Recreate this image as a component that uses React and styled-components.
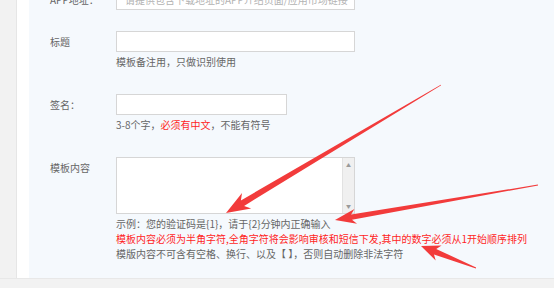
import React from "react";
import styled, { createGlobalStyle } from "styled-components";

const Global = createGlobalStyle`
  html, body { margin: 0; padding: 0; }
  body {
    width: 554px; height: 288px; overflow: hidden;
    font-family: "Noto Sans CJK SC", "Noto Sans", sans-serif;
    font-size: 10px; color: #666;
    background: #f2f2f2;
  }
`;

const Page = styled.div`
  position: relative;
  width: 554px;
  height: 288px;
  display: flex;
  flex-direction: column;
  overflow: hidden;
`;

const Body = styled.div`
  display: flex;
  height: 278px;
`;

const SideStrip = styled.div`
  width: 16px;
  background: #f2f2f2;
  border-right: 1px solid #e6e6e6;
`;

const Gutter = styled.div`
  width: 12px;
  background: #ffffff;
`;

const Panel = styled.div`
  flex: 1;
  background: #f5f9fd;
  padding-left: 21px;
  overflow: hidden;
`;

const Footer = styled.div`
  flex: 1;
  background: #f2f2f2;
  border-top: 1px solid #e8e8e8;
`;

const Row = styled.div`
  display: grid;
  grid-template-columns: 66px auto;
  align-items: start;
  margin-top: ${(p) => p.$top || 0}px;
  margin-bottom: ${(p) => p.$gap || 0}px;
`;

const Label = styled.div`
  line-height: 21px;
  font-size: 10px;
  color: #666;
  white-space: nowrap;
`;

const Field = styled.div`
  display: flex;
  flex-direction: column;
`;

const Input = styled.div`
  box-sizing: border-box;
  width: ${(p) => p.$w}px;
  height: 21px;
  background: #fff;
  border: 1px solid #d6d6d6;
  padding-left: 8px;
  line-height: 19px;
  color: #b3b3b3;
  font-size: 10px;
  white-space: nowrap;
  overflow: hidden;
`;

const TextArea = styled.div`
  box-sizing: border-box;
  width: 239px;
  height: 57px;
  background: #fff;
  border: 1px solid #d6d6d6;
  display: flex;
  justify-content: flex-end;
`;

const ScrollTrack = styled.div`
  width: 11px;
  background: #f0f0f0;
  border-left: 1px solid #e2e2e2;
  display: flex;
  flex-direction: column;
  justify-content: space-between;
  align-items: center;
  padding: 4px 0;
  color: #9a9a9a;
  font-size: 5px;
  line-height: 6px;
`;

const Hint = styled.div`
  line-height: 15px;
  font-size: 10px;
  color: ${(p) => (p.$red ? "#ff1f1f" : "#666")};
  white-space: nowrap;
  margin-top: ${(p) => (p.$first ? 2 : 0)}px;
`;

const Red = styled.span`
  color: #ff1f1f;
`;

const Overlay = styled.svg`
  position: absolute;
  left: 0;
  top: 0;
  pointer-events: none;
`;

function arrowPoints(tx, ty, px, py, headLen, headHalf, shaftW) {
  const dx = px - tx;
  const dy = py - ty;
  const len = Math.hypot(dx, dy);
  const ux = dx / len;
  const uy = dy / len;
  const nx = -uy;
  const ny = ux;
  const bx = px - ux * headLen;
  const by = py - uy * headLen;
  const nbx = px - ux * headLen * 0.8;
  const nby = py - uy * headLen * 0.8;
  const pts = [
    [tx + nx * 0.4, ty + ny * 0.4],
    [nbx + nx * shaftW, nby + ny * shaftW],
    [bx + nx * headHalf, by + ny * headHalf],
    [px, py],
    [bx - nx * headHalf, by - ny * headHalf],
    [nbx - nx * shaftW, nby - ny * shaftW],
    [tx - nx * 0.4, ty - ny * 0.4],
  ];
  return pts.map((p) => p.map((v) => v.toFixed(1)).join(",")).join(" ");
}

const arrows = [
  { t: [441, 85], p: [226, 213], hl: 24, hh: 9, sw: 3.2 },
  { t: [538, 185], p: [335, 220], hl: 21, hh: 7.5, sw: 2.6 },
  { t: [476, 268], p: [421, 246], hl: 19, hh: 8, sw: 3 },
];

export default function App() {
  return (
    <>
      <Global />
      <Page>
        <Body>
          <SideStrip />
          <Gutter />
          <Panel>
            <Row $top={-11} $gap={21}>
              <Label>APP地址：</Label>
              <Field>
                <Input $w={239}>请提供包含下载地址的APP介绍页面/应用市场链接</Input>
              </Field>
            </Row>
            <Row $gap={25}>
              <Label>标题</Label>
              <Field>
                <Input $w={239} />
                <Hint $first>模板备注用，只做识别使用</Hint>
              </Field>
            </Row>
            <Row $gap={25}>
              <Label>签名：</Label>
              <Field>
                <Input $w={171} />
                <Hint $first>
                  3-8个字，<Red>必须有中文</Red>，不能有符号
                </Hint>
              </Field>
            </Row>
            <Row>
              <Label>模板内容</Label>
              <Field>
                <TextArea>
                  <ScrollTrack>
                    <span>▲</span>
                    <span>▼</span>
                  </ScrollTrack>
                </TextArea>
                <Hint $first>示例：您的验证码是{"{1}"}，请于{"{2}"}分钟内正确输入</Hint>
                <Hint $red>模板内容必须为半角字符,全角字符将会影响审核和短信下发,其中的数字必须从1开始顺序排列</Hint>
                <Hint>模版内容不可含有空格、换行、以及【 】，否则自动删除非法字符</Hint>
              </Field>
            </Row>
          </Panel>
        </Body>
        <Footer />
        <Overlay width="554" height="288" viewBox="0 0 554 288">
          {arrows.map((a, i) => (
            <polygon
              key={i}
              points={arrowPoints(a.t[0], a.t[1], a.p[0], a.p[1], a.hl, a.hh, a.sw)}
              fill="#f23b3b"
            />
          ))}
        </Overlay>
      </Page>
    </>
  );
}
